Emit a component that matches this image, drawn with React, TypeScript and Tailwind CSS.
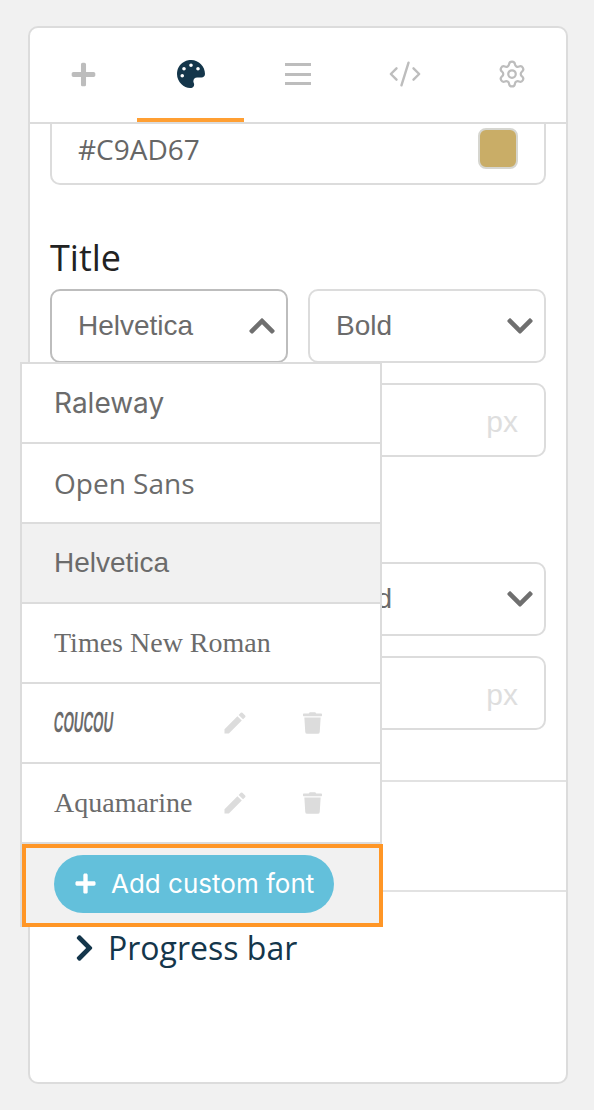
import { CodeXml, Settings } from "lucide-react";
import { FaChevronDown, FaChevronRight, FaChevronUp, FaPalette, FaPlus, FaTrash } from "react-icons/fa";
import { MdEdit } from "react-icons/md";

function Tab({ active, children }: { active?: boolean; children: React.ReactNode }) {
  return (
    <div className={`flex h-[94px] flex-1 items-center justify-center border-b-4 pt-[2px] ${active ? "border-[#ff9f33]" : "border-transparent"}`}>
      {children}
    </div>
  );
}

function Select({ label, up }: { label: string; up?: boolean }) {
  return (
    <div className={`flex h-[74px] items-center justify-between rounded-[10px] border-2 pl-[26px] pr-[11px] ${up ? "border-[#bdbdbd]" : "border-[#dcdcdc]"}`}>
      <span className="font-['Liberation_Sans',sans-serif] text-[28px] text-[#6b6b6b]">{label}</span>
      {up ? <FaChevronUp className="h-[30px] w-[26px] text-[#6f6f6f]" /> : <FaChevronDown className="h-[30px] w-[26px] text-[#6f6f6f]" />}
    </div>
  );
}

function PxInput() {
  return (
    <div className="flex h-[74px] items-center justify-end rounded-[10px] border-2 border-[#dcdcdc] pr-[26px] pt-[3px]">
      <span className="font-['Liberation_Sans',sans-serif] text-[30px] text-[#dedede]">px</span>
    </div>
  );
}

function FontRow({ children, active, actions }: { children: React.ReactNode; active?: boolean; actions?: boolean }) {
  return (
    <div className={`flex h-[80px] items-center border-b-2 border-[#dcdcdc] pl-[32px] ${active ? "bg-[#f1f1f1]" : "bg-white"}`}>
      <div className="flex-1">{children}</div>
      {actions && (
        <div className="flex items-center">
          <MdEdit className="mr-[54px] h-[28px] w-[28px] text-[#dcdcdc]" />
          <FaTrash className="mr-[58px] h-[22px] w-[19px] text-[#dcdcdc]" />
        </div>
      )}
    </div>
  );
}

export default function App() {
  return (
    <div className="h-[1110px] w-[594px] overflow-hidden bg-[#f1f1f1] pl-[28px] pt-[26px]">
      <div className="relative h-[1058px] w-[540px] rounded-[10px] border-2 border-[#dcdcdc] bg-white">
        <div className="flex h-[96px] border-b-2 border-[#dcdcdc]">
          <Tab><FaPlus className="h-[27px] w-[27px] text-[#bdbdbd]" /></Tab>
          <Tab active><FaPalette className="h-[28px] w-[28px] text-[#14364b]" /></Tab>
          <Tab>
            <div className="flex h-[22px] w-[26px] flex-col justify-between">
              <div className="h-[3px] bg-[#bdbdbd]" />
              <div className="h-[3px] bg-[#bdbdbd]" />
              <div className="h-[3px] bg-[#bdbdbd]" />
            </div>
          </Tab>
          <Tab><CodeXml className="h-[34px] w-[34px] text-[#bdbdbd]" strokeWidth={1.7} /></Tab>
          <Tab><Settings className="h-[30px] w-[30px] text-[#bdbdbd]" strokeWidth={1.8} /></Tab>
        </div>

        <div className="h-[656px] overflow-hidden px-[20px]">
          <div className="-mt-[12px] flex h-[73px] items-center justify-between rounded-[10px] border-2 border-[#dcdcdc] pl-[26px] pr-[26px]">
            <span className="font-['Open_Sans',sans-serif] text-[28px] text-[#666]">#C9AD67</span>
            <div className="h-[41px] w-[40px] rounded-[8px] border-2 border-[#d6d6d0] bg-[#c9ad67]" />
          </div>
          <div className="mb-[8px] mt-[50px] font-['Open_Sans',sans-serif] text-[36px] leading-[46px] text-[#222]">Title</div>
          <div className="grid grid-cols-2 gap-[20px]">
            <Select label="Helvetica" up />
            <Select label="Bold" />
            <div />
            <PxInput />
          </div>
          <div className="h-[105px]" />
          <div className="grid grid-cols-2 gap-[20px]">
            <Select label="Helvetica" />
            <Select label="Bold" />
            <div />
            <PxInput />
          </div>
        </div>

        <div className="h-[112px] border-y-2 border-[#e2e2e2]" />
        <div className="flex h-[108px] items-center pl-[45px] pt-[4px]">
          <FaChevronRight className="h-[30px] w-[19px] text-[#14364b]" />
          <span className="ml-[14px] font-['Open_Sans',sans-serif] text-[32px] text-[#14364b]">Progress bar</span>
        </div>

        <div className="absolute left-[-10px] top-[334px] w-[362px] border-x-2 border-t-2 border-[#dcdcdc] bg-white text-[#6b6b6b]">
          <FontRow><span className="font-['Inter',sans-serif] text-[28px]">Raleway</span></FontRow>
          <FontRow><span className="font-['Open_Sans',sans-serif] text-[28px]">Open Sans</span></FontRow>
          <FontRow active><span className="font-['Liberation_Sans',sans-serif] text-[28px]">Helvetica</span></FontRow>
          <FontRow><span className="font-['Liberation_Serif',serif] text-[28px]">Times New Roman</span></FontRow>
          <FontRow actions>
            <span className="inline-block origin-left -skew-x-12 scale-x-[0.46] font-['Liberation_Sans',sans-serif] text-[29px] font-bold">COUCOU</span>
          </FontRow>
          <FontRow actions><span className="font-['Liberation_Serif',serif] text-[28px]">Aquamarine</span></FontRow>
          <div className="-mr-[3px] flex h-[83px] items-center border-4 border-[#ff9626] bg-[#f1f1f1] pb-[4px] pl-[28px]">
            <div className="flex h-[58px] w-[280px] items-center rounded-full bg-[#63c0db] pl-[20px] text-white">
              <FaPlus className="h-[23px] w-[23px]" />
              <span className="ml-[14px] font-['Inter',sans-serif] text-[26px]">Add custom font</span>
            </div>
          </div>
        </div>
      </div>
    </div>
  );
}
